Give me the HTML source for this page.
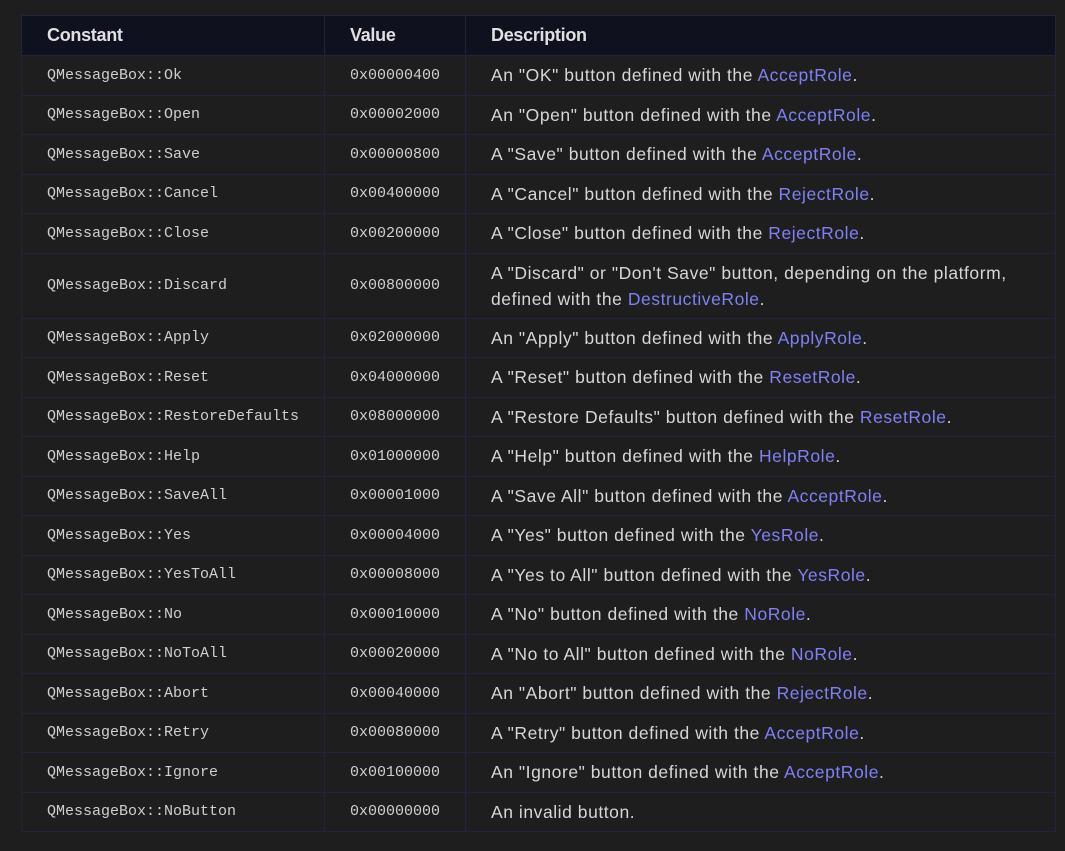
<!DOCTYPE html>
<html><head><style>
html,body{margin:0;padding:0;background:#1e1e1e;width:1065px;height:851px;overflow:hidden}
table{position:absolute;left:21px;top:15px;width:1035px;border-collapse:collapse;table-layout:fixed}
td,th{border:1px solid #20243c;padding:0 0 0 25px;text-align:left;vertical-align:middle;white-space:nowrap}
th{background:#10111e;color:#e0e0e0;font:bold 18px "Liberation Sans",sans-serif;height:39px;letter-spacing:-0.3px}
td{color:#d0d0d0;height:38.5px}
td.m{font:15px "Liberation Mono",monospace;color:#cfcfcf}
td.d{font:17.5px "Liberation Sans",sans-serif;letter-spacing:0.55px;color:#d6d6d6;line-height:26px}
a{color:#8080f4;text-decoration:none}
tr.tall td{height:64px}
</style></head><body>
<table>
<colgroup><col style="width:303px"><col style="width:141px"><col></colgroup>
<tr><th>Constant</th><th>Value</th><th>Description</th></tr>
<tr><td class="m">QMessageBox::Ok</td><td class="m">0x00000400</td><td class="d">An "OK" button defined with the <a>AcceptRole</a>.</td></tr>
<tr><td class="m">QMessageBox::Open</td><td class="m">0x00002000</td><td class="d">An "Open" button defined with the <a>AcceptRole</a>.</td></tr>
<tr><td class="m">QMessageBox::Save</td><td class="m">0x00000800</td><td class="d">A "Save" button defined with the <a>AcceptRole</a>.</td></tr>
<tr><td class="m">QMessageBox::Cancel</td><td class="m">0x00400000</td><td class="d">A "Cancel" button defined with the <a>RejectRole</a>.</td></tr>
<tr><td class="m">QMessageBox::Close</td><td class="m">0x00200000</td><td class="d">A "Close" button defined with the <a>RejectRole</a>.</td></tr>
<tr class="tall"><td class="m">QMessageBox::Discard</td><td class="m">0x00800000</td><td class="d">A "Discard" or "Don't Save" button, depending on the platform,<br>defined with the <a>DestructiveRole</a>.</td></tr>
<tr><td class="m">QMessageBox::Apply</td><td class="m">0x02000000</td><td class="d">An "Apply" button defined with the <a>ApplyRole</a>.</td></tr>
<tr><td class="m">QMessageBox::Reset</td><td class="m">0x04000000</td><td class="d">A "Reset" button defined with the <a>ResetRole</a>.</td></tr>
<tr><td class="m">QMessageBox::RestoreDefaults</td><td class="m">0x08000000</td><td class="d">A "Restore Defaults" button defined with the <a>ResetRole</a>.</td></tr>
<tr><td class="m">QMessageBox::Help</td><td class="m">0x01000000</td><td class="d">A "Help" button defined with the <a>HelpRole</a>.</td></tr>
<tr><td class="m">QMessageBox::SaveAll</td><td class="m">0x00001000</td><td class="d">A "Save All" button defined with the <a>AcceptRole</a>.</td></tr>
<tr><td class="m">QMessageBox::Yes</td><td class="m">0x00004000</td><td class="d">A "Yes" button defined with the <a>YesRole</a>.</td></tr>
<tr><td class="m">QMessageBox::YesToAll</td><td class="m">0x00008000</td><td class="d">A "Yes to All" button defined with the <a>YesRole</a>.</td></tr>
<tr><td class="m">QMessageBox::No</td><td class="m">0x00010000</td><td class="d">A "No" button defined with the <a>NoRole</a>.</td></tr>
<tr><td class="m">QMessageBox::NoToAll</td><td class="m">0x00020000</td><td class="d">A "No to All" button defined with the <a>NoRole</a>.</td></tr>
<tr><td class="m">QMessageBox::Abort</td><td class="m">0x00040000</td><td class="d">An "Abort" button defined with the <a>RejectRole</a>.</td></tr>
<tr><td class="m">QMessageBox::Retry</td><td class="m">0x00080000</td><td class="d">A "Retry" button defined with the <a>AcceptRole</a>.</td></tr>
<tr><td class="m">QMessageBox::Ignore</td><td class="m">0x00100000</td><td class="d">An "Ignore" button defined with the <a>AcceptRole</a>.</td></tr>
<tr><td class="m">QMessageBox::NoButton</td><td class="m">0x00000000</td><td class="d">An invalid button.</td></tr>
</table>
</body></html>
